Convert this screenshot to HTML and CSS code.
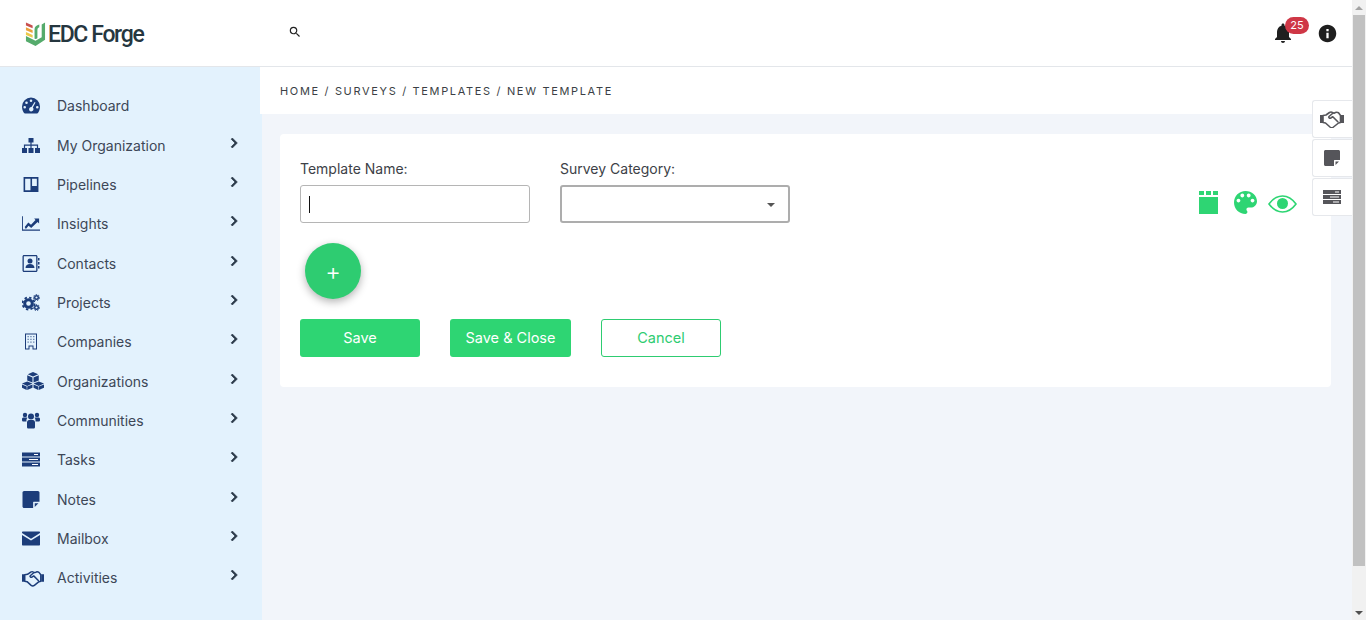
FILE: index.html
```html
<!DOCTYPE html>
<html lang="en">
  <head>
    <meta charset="UTF-8" />
    <meta name="viewport" content="width=device-width, initial-scale=1.0" />
    <title>EDC Forge - New Template</title>
    <link rel="stylesheet" href="styles.css">
  </head>
  <body>
    <svg class="sprites" xmlns="http://www.w3.org/2000/svg">
      <symbol id="i-chevron" viewBox="0 0 24 24">
        <path d="M10 6L8.59 7.41 13.17 12l-4.58 4.59L10 18l6-6z" stroke="currentColor" stroke-width=".8" />
      </symbol>
      <symbol id="i-hands" viewBox="0 0 24 18">
        <path d="M0 5h3v8H0zM21 5h3v8h-3z" />
        <path d="M3 5.500l3-.5 3.500-2.500c1-.6 2-.6 3 0l1.500 .7 1.500-.7c1-.4 2-.3 3 .3l2 2.700v7l-2 .5-5 4c-1 .8-2.500 .8-3.500 0l-4.500-4-2.500-.5z" fill="none" stroke="currentColor" stroke-width="1.600" stroke-linejoin="round" />
        <path d="M12.500 3.500l-3.500 3c-.8 1 .6 2.200 1.800 1.500l2-1.300 5 5" fill="none" stroke="currentColor" stroke-width="1.600" stroke-linecap="round" stroke-linejoin="round" />
      </symbol>
      <symbol id="i-note" viewBox="0 0 16 16">
        <path d="M1.500 0h13c.8 0 1.500 .7 1.500 1.500V10h-5.500c-.3 0-.5 .2-.5 .5V16H1.500C.7 16 0 15.300 0 14.500v-13C0 .7 .7 0 1.500 0z" />
        <path d="M11.500 11.500H15L11.500 15z" />
      </symbol>
      <symbol id="i-tasks" viewBox="0 0 18 14">
        <path d="M0 0h18v4H0zM0 5h18v4H0zM0 10h18v4H0z" fill-rule="evenodd" />
        <path d="M12 1.600h4v.8h-4zM7 6.600h9v.8H7zM10 11.600h6v.8h-6z" fill="#fff" />
      </symbol>
    </svg>

    <div class="window">
      <div class="screen">
        <header class="topbar">
          <a class="logo">
            <svg class="logo-mark" viewBox="0 0 22 26" xmlns="http://www.w3.org/2000/svg">
              <path d="M1 1l7 3v3L1 4z" fill="#c8504f" />
              <path d="M1 6l7 3v3L1 9z" fill="#e9a13b" />
              <path d="M1 11l7 3v3l-7-3z" fill="#ecc94a" />
              <path d="M1 15l10 5 6.500-3.500V3L21 1v18l-10 6.500L1 20.500z" fill="#55ab6c" />
              <path d="M10 18V8c0-3 2-4 5-5v3c-1.500 .5-2 1.500-2 3v8.500l-1.500 .8z" fill="#55ab6c" />
            </svg>
            <span class="logo-text">EDC Forge</span>
          </a>
          <svg class="search-icon" viewBox="0 0 24 24" xmlns="http://www.w3.org/2000/svg">
            <path d="M15.500 14h-.79l-.28-.27A6.471 6.471 0 0 0 16 9.500 6.500 6.500 0 1 0 9.500 16c1.610 0 3.090-.59 4.230-1.570l.27 .28v.79l5 4.990L20.490 19l-4.990-5zm-6 0C7.010 14 5 11.990 5 9.500S7.010 5 9.500 5 14 7.010 14 9.500 11.990 14 9.500 14z" />
          </svg>
          <div class="topbar-right">
            <div class="bell">
              <svg viewBox="0 0 24 24" xmlns="http://www.w3.org/2000/svg">
                <path d="M12 22c1.100 0 2-.9 2-2h-4c0 1.100 .89 2 2 2zm6-6v-5c0-3.070-1.640-5.640-4.500-6.320V4c0-.83-.67-1.500-1.500-1.500s-1.500 .67-1.500 1.500v.68C7.630 5.360 6 7.920 6 11v5l-2 2v1h16v-1l-2-2z" />
              </svg>
              <span class="badge">25</span>
            </div>
            <svg class="info-icon" viewBox="0 0 24 24" xmlns="http://www.w3.org/2000/svg">
              <path d="M12 2C6.480 2 2 6.480 2 12s4.480 10 10 10 10-4.480 10-10S17.520 2 12 2zm1.300 15.500h-2.600v-6.500h2.600zm0-8h-2.600V6.800h2.600z" />
            </svg>
          </div>
        </header>

        <div class="body-row">
          <nav class="sidebar">
            <a class="nav-item">
              <svg class="nav-icon" viewBox="0 0 18 16" xmlns="http://www.w3.org/2000/svg">
                <path fill-rule="evenodd" d="M9 0a9 9 0 0 1 9 9c0 2.500-.7 4.700-2 6.500-.3 .3-.6 .5-1 .5H3c-.4 0-.7-.2-1-.5C.7 13.700 0 11.500 0 9a9 9 0 0 1 9-9zM9 2a1.300 1.300 0 1 0 0 2.600A1.300 1.300 0 0 0 9 2zM4.500 4a1.300 1.300 0 1 0 0 2.600 1.300 1.300 0 0 0 0-2.600zM2.700 8.500a1.300 1.300 0 1 0 0 2.600 1.300 1.300 0 0 0 0-2.600zM15.300 8.500a1.300 1.300 0 1 0 0 2.600 1.300 1.300 0 0 0 0-2.600zM12.600 4.600L9.500 9.500a2.200 2.200 0 1 0 1.300 .6l2.700-5z" />
              </svg>
              <span class="nav-label">Dashboard</span>
            </a>
            <a class="nav-item">
              <svg class="nav-icon" viewBox="0 0 18 15" xmlns="http://www.w3.org/2000/svg">
                <path d="M6.500 0h5v4.500h-5zM0 10h5v5H0zM6.500 10h5v5h-5zM13 10h5v5h-5z" />
                <path d="M8.400 4h1.200v2.500h6.500V11h-1.200V7.700H9.600V11H8.400V7.700H3.100V11H1.900V6.500h6.500z" />
              </svg>
              <span class="nav-label">My Organization</span>
              <svg class="nav-arrow"><use href="#i-chevron" /></svg>
            </a>
            <a class="nav-item">
              <svg class="nav-icon" viewBox="0 0 16 16" xmlns="http://www.w3.org/2000/svg">
                <path fill-rule="evenodd" d="M1 1h14v14H1zM2.500 2.500V13.500H7.500V2.500zM9 2.500V9.500H13.500V2.500z" />
              </svg>
              <span class="nav-label">Pipelines</span>
              <svg class="nav-arrow"><use href="#i-chevron" /></svg>
            </a>
            <a class="nav-item">
              <svg class="nav-icon" viewBox="0 0 20 16" xmlns="http://www.w3.org/2000/svg">
                <path d="M0 0h1v14.800h19V16H0z" />
                <path d="M3 12l4-5 3 2.500L15 4l-1.500-1.500H19V8l-1.700-1.700L10.200 13 7.300 10.400 4.300 14z" />
              </svg>
              <span class="nav-label">Insights</span>
              <svg class="nav-arrow"><use href="#i-chevron" /></svg>
            </a>
            <a class="nav-item">
              <svg class="nav-icon" viewBox="0 0 18 17" xmlns="http://www.w3.org/2000/svg">
                <path fill-rule="evenodd" d="M2 0h12c.8 0 1.500 .7 1.500 1.500v14c0 .8-.7 1.500-1.500 1.500H2c-.8 0-1.500-.7-1.500-1.500v-14C.5 .7 1.200 0 2 0zM2 1.300c-.1 0-.2 .1-.2 .2v14c0 .1 .1 .2 .2 .2h12c.1 0 .2-.1 .2-.2v-14c0-.1-.1-.2-.2-.2z" />
                <circle cx="8" cy="6" r="2.500" />
                <path d="M3.500 13c0-2.500 2-4 4.500-4s4.500 1.500 4.500 4zM16 3h1.500v2.500H16zM16 7h1.500v2.500H16zM16 11h1.500v2.500H16z" />
              </svg>
              <span class="nav-label">Contacts</span>
              <svg class="nav-arrow"><use href="#i-chevron" /></svg>
            </a>
            <a class="nav-item">
              <svg class="nav-icon" viewBox="0 0 18 16" xmlns="http://www.w3.org/2000/svg">
                <circle cx="6.500" cy="9" r="3.800" fill="none" stroke="currentColor" stroke-width="3" />
                <circle cx="6.500" cy="9" r="6" fill="none" stroke="currentColor" stroke-width="1.800" stroke-dasharray="2.400 2.300" />
                <circle cx="14.500" cy="3" r="1.800" fill="none" stroke="currentColor" stroke-width="1.400" />
                <circle cx="14.500" cy="3" r="3" fill="none" stroke="currentColor" stroke-width="1" stroke-dasharray="1.400 1.200" />
                <circle cx="14.500" cy="13" r="1.800" fill="none" stroke="currentColor" stroke-width="1.400" />
                <circle cx="14.500" cy="13" r="3" fill="none" stroke="currentColor" stroke-width="1" stroke-dasharray="1.400 1.200" />
              </svg>
              <span class="nav-label">Projects</span>
              <svg class="nav-arrow"><use href="#i-chevron" /></svg>
            </a>
            <a class="nav-item">
              <svg class="nav-icon" viewBox="0 0 18 16" xmlns="http://www.w3.org/2000/svg">
                <path fill-rule="evenodd" d="M3 0h12v16h-4.500v-3h-3v3H3zM4 1v14h2.500v-3h5v3H14V1z" />
                <path d="M5.500 2.500h1.300v1.300H5.500zM8.300 2.500h1.300v1.300H8.300zM11.100 2.500h1.300v1.300h-1.300zM5.500 5.200h1.300v1.300H5.500zM8.300 5.200h1.300v1.300H8.300zM11.100 5.200h1.300v1.300h-1.300zM5.500 7.900h1.300v1.300H5.500zM8.300 7.900h1.300v1.300H8.300zM11.100 7.900h1.300v1.300h-1.300z" opacity=".65" />
              </svg>
              <span class="nav-label">Companies</span>
              <svg class="nav-arrow"><use href="#i-chevron" /></svg>
            </a>
            <a class="nav-item">
              <svg class="nav-icon wide" viewBox="0 0 21 17" xmlns="http://www.w3.org/2000/svg">
                <path d="M10.500 0l5 2-5 2.200-5-2.200zM5 3l5 2.200v4.800L5 8zM16 3v5l-5 2V5.200zM5 9l5 2-5 2.200-5-2.200zM16 9l5 2-5 2.200-5-2.200z" />
                <path d="M0 11.800l4.500 2V17L0 15zM10 11.800V15l-5 2v-3.200zM11 11.800l4.500 2V17L11 15zM21 11.800V15l-5 2v-3.200z" />
              </svg>
              <span class="nav-label">Organizations</span>
              <svg class="nav-arrow"><use href="#i-chevron" /></svg>
            </a>
            <a class="nav-item">
              <svg class="nav-icon" viewBox="0 0 18 16" xmlns="http://www.w3.org/2000/svg">
                <circle cx="3" cy="2.500" r="2.200" />
                <circle cx="15" cy="2.500" r="2.200" />
                <circle cx="9" cy="4" r="3" />
                <path d="M0 6.500c0-1 .8-1.500 1.500-1.500h3c.4 0 .7 .1 1 .3C4.500 6 4.300 8 4.500 9H1.500C.7 9 0 8.500 0 7.500zM18 6.500c0-1-.8-1.500-1.500-1.500h-3c-.4 0-.7 .1-1 .3 1 .7 1.200 2.700 1 3.700h3c.8 0 1.500-.5 1.500-1.500zM5 10c0-1.500 1-2.500 2-2.500h4c1 0 2 1 2 2.500v4.500c0 1-.7 1.500-1.500 1.500h-5C5.700 16 5 15.500 5 14.500z" />
              </svg>
              <span class="nav-label">Communities</span>
              <svg class="nav-arrow"><use href="#i-chevron" /></svg>
            </a>
            <a class="nav-item">
              <svg class="nav-icon"><use href="#i-tasks" /></svg>
              <span class="nav-label">Tasks</span>
              <svg class="nav-arrow"><use href="#i-chevron" /></svg>
            </a>
            <a class="nav-item">
              <svg class="nav-icon"><use href="#i-note" /></svg>
              <span class="nav-label">Notes</span>
              <svg class="nav-arrow"><use href="#i-chevron" /></svg>
            </a>
            <a class="nav-item">
              <svg class="nav-icon" viewBox="0 0 18 14" xmlns="http://www.w3.org/2000/svg">
                <path d="M1 0h16c.6 0 1 .4 1 1v.6L9 7.200 0 1.600V1c0-.6 .4-1 1-1zM0 3.400l9 5.600 9-5.600V13c0 .6-.4 1-1 1H1c-.6 0-1-.4-1-1z" />
              </svg>
              <span class="nav-label">Mailbox</span>
              <svg class="nav-arrow"><use href="#i-chevron" /></svg>
            </a>
            <a class="nav-item">
              <svg class="nav-icon wide"><use href="#i-hands" /></svg>
              <span class="nav-label">Activities</span>
              <svg class="nav-arrow"><use href="#i-chevron" /></svg>
            </a>
          </nav>

          <main class="main">
            <div class="breadcrumb">HOME / SURVEYS / TEMPLATES / NEW TEMPLATE</div>
            <div class="content">
              <section class="card">
                <div class="form-head">
                  <div class="field">
                    <label class="field-label">Template Name:</label>
                    <div class="input"><span class="caret"></span></div>
                  </div>
                  <div class="field">
                    <label class="field-label">Survey Category:</label>
                    <div class="input select"><span class="select-arrow"></span></div>
                  </div>
                  <div class="tools">
                    <svg class="tool-block" viewBox="0 0 19 23" xmlns="http://www.w3.org/2000/svg">
                      <path d="M0 0h5v4H0zM7 0h5v4H7zM14 0h5v4h-5zM0 6h19v17H0z" />
                    </svg>
                    <svg class="tool-palette" viewBox="3 3 18 18" xmlns="http://www.w3.org/2000/svg">
                      <path d="M12 3c-4.970 0-9 4.030-9 9s4.030 9 9 9c.83 0 1.500-.67 1.500-1.500 0-.39-.15-.74-.39-1.010-.23-.26-.38-.61-.38-.99 0-.83 .67-1.500 1.500-1.500H16c2.760 0 5-2.240 5-5 0-4.420-4.030-8-9-8zm-5.500 9c-.83 0-1.500-.67-1.500-1.500S5.670 9 6.500 9 8 9.670 8 10.500 7.330 12 6.500 12zm3-4C8.670 8 8 7.330 8 6.500S8.670 5 9.500 5s1.500 .67 1.500 1.500S10.330 8 9.500 8zm5 0c-.83 0-1.500-.67-1.500-1.500S13.670 5 14.500 5s1.500 .67 1.500 1.500S15.330 8 14.500 8zm3 4c-.83 0-1.500-.67-1.500-1.500S16.670 9 17.500 9s1.500 .67 1.500 1.500-.67 1.500-1.500 1.500z" />
                    </svg>
                    <svg class="tool-eye" viewBox="0 0 29 18" xmlns="http://www.w3.org/2000/svg">
                      <path d="M1 9C5 3.500 9.500 1 14.500 1S24 3.500 28 9C24 14.500 19.500 17 14.500 17S5 14.500 1 9z" fill="none" stroke="currentColor" stroke-width="1.600" />
                      <circle cx="14.500" cy="8.500" r="5.500" />
                    </svg>
                  </div>
                </div>
                <button class="fab">+</button>
                <div class="actions">
                  <button class="btn btn-solid">Save</button>
                  <button class="btn btn-solid btn-wide">Save &amp; Close</button>
                  <button class="btn btn-outline">Cancel</button>
                </div>
              </section>
            </div>
          </main>
        </div>

        <div class="side-tabs">
          <div class="side-tab"><svg class="tab-hands"><use href="#i-hands" /></svg></div>
          <div class="side-tab"><svg class="tab-note"><use href="#i-note" /></svg></div>
          <div class="side-tab"><svg class="tab-tasks"><use href="#i-tasks" /></svg></div>
        </div>
      </div>

      <div class="scrollbar">
        <span class="scroll-btn"><span class="arrow-up"></span></span>
        <div class="scroll-track"><div class="scroll-thumb"></div></div>
        <span class="scroll-btn"><span class="arrow-down"></span></span>
      </div>
    </div>
  </body>
</html>
```

FILE: styles.css
```css
* {
  box-sizing: border-box;
}

html,
body {
  margin: 0;
  padding: 0;
  height: 100%;
  overflow: hidden;
}

body {
  font-family: "Inter", "Open Sans", sans-serif;
  font-size: 14px;
  color: #3d4757;
  background: #f2f5fa;
}

.sprites {
  display: none;
}

.window {
  display: flex;
  height: 620px;
}

.screen {
  flex: 1;
  min-width: 0;
  display: flex;
  flex-direction: column;
  position: relative;
}

/* top bar */
.topbar {
  height: 67px;
  flex: none;
  display: flex;
  align-items: center;
  background: #fff;
  border-bottom: 1px solid #e3e6ea;
  padding: 0 14px 0 25px;
}

.logo {
  display: flex;
  align-items: center;
  gap: 2px;
  width: 263px;
}

.logo-mark {
  width: 21px;
  height: 26px;
  margin-top: 1px;
}

.logo-text {
  margin-top: 2px;
  font-family: "Roboto", sans-serif;
  font-size: 23px;
  font-weight: 500;
  letter-spacing: -1.35px;
  color: #25363f;
}

.search-icon {
  width: 14px;
  height: 14px;
  margin-top: -3px;
  fill: #222;
}

.topbar-right {
  margin-left: auto;
  display: flex;
  align-items: center;
  gap: 22px;
}

.bell {
  position: relative;
  width: 24px;
  height: 24px;
  fill: #1f1f1f;
}

.bell svg {
  display: block;
  width: 24px;
  height: 24px;
}

.badge {
  position: absolute;
  left: 14px;
  top: -4px;
  width: 24px;
  height: 17px;
  border-radius: 9px;
  background: #cf3746;
  color: #fff;
  font-size: 11px;
  line-height: 16px;
  text-align: center;
}

.info-icon {
  width: 21px;
  height: 21px;
  fill: #1f1f1f;
}

/* sidebar + main */
.body-row {
  flex: 1;
  min-height: 0;
  display: flex;
}

.sidebar {
  width: 262px;
  flex: none;
  background: #e3f2fd;
  padding-top: 19.2px;
}

.nav-item {
  height: 39.33px;
  display: flex;
  align-items: center;
  padding-left: 22px;
}

.nav-icon {
  width: 18px;
  height: 17px;
  flex: none;
  margin-right: 17px;
  fill: #1c3d7a;
  color: #1c3d7a;
}

.nav-icon.wide {
  width: 22px;
  height: 18px;
  margin-right: 13px;
}

.nav-label {
  flex: 1;
  font-size: 14px;
}

.nav-arrow {
  width: 20px;
  height: 20px;
  margin: -5px 18px 0 0;
  fill: #2b3a4a;
  color: #2b3a4a;
}

.main {
  flex: 1;
  min-width: 0;
  display: flex;
  flex-direction: column;
}

.breadcrumb {
  height: 47px;
  flex: none;
  margin-left: -2px;
  padding: 0 20px;
  display: flex;
  align-items: center;
  background: #fff;
  font-size: 11px;
  letter-spacing: 1.66px;
  color: #3b3f45;
}

.content {
  flex: 1;
  padding: 20px 21px 0 18px;
}

.card {
  background: #fff;
  border-radius: 4px;
  padding: 26px 20px 30px;
  height: 253px;
}

.form-head {
  display: flex;
  gap: 30px;
}

.field {
  width: 230px;
}

.field-label {
  display: block;
  height: 25px;
  line-height: 17px;
  font-size: 14px;
  color: #3d4147;
}

.input {
  height: 38px;
  border: 1px solid #b5b5b5;
  border-radius: 3px;
  background: #fff;
  display: flex;
  align-items: center;
  padding-left: 8px;
}

.caret {
  width: 1px;
  height: 17px;
  background: #111;
}

.select {
  border: 2px solid #adadad;
  justify-content: flex-end;
  padding-right: 13px;
}

.select-arrow {
  border-left: 4px solid transparent;
  border-right: 4px solid transparent;
  border-top: 4px solid #555;
  margin-top: 2px;
}

.tools {
  margin-left: auto;
  margin-right: 14px;
  height: 54px;
  display: flex;
  align-items: flex-end;
  gap: 16px;
  fill: #2ed573;
  color: #2ed573;
}

.tool-block {
  width: 19px;
  height: 23px;
}

.tool-palette {
  width: 23px;
  height: 23px;
}

.tool-eye {
  width: 29px;
  height: 18px;
  margin: 0 0 1px -5px;
}

.fab {
  display: block;
  width: 56px;
  height: 56px;
  margin: 20px 0 20px 5px;
  border: none;
  border-radius: 50%;
  background: #2ecc71;
  color: #fff;
  font-family: inherit;
  font-size: 24px;
  font-weight: 300;
  box-shadow: 0 3px 8px rgba(0, 0, 0, .3);
}

.actions {
  display: flex;
  gap: 30px;
}

.btn {
  width: 120px;
  height: 38px;
  padding-bottom: 2px;
  border-radius: 3px;
  font-family: inherit;
  font-size: 14.5px;
}

.btn-wide {
  width: 121px;
}

.btn-solid {
  border: none;
  background: #2ed573;
  color: #fff;
}

.btn-outline {
  border: 1px solid #2ecc71;
  background: #fff;
  color: #2ecc71;
}

/* floating tabs on the right edge */
.side-tabs {
  position: absolute;
  top: 100px;
  right: 0;
  display: flex;
  flex-direction: column;
  gap: 1px;
}

.side-tab {
  width: 40px;
  height: 38px;
  padding-right: 2px;
  display: flex;
  align-items: center;
  justify-content: center;
  background: #fff;
  border: 1px solid #e6e8ec;
  border-right: none;
  border-radius: 3px 0 0 3px;
  fill: #55555a;
  color: #55555a;
}

.tab-hands {
  width: 24px;
  height: 18px;
}

.tab-note {
  width: 16px;
  height: 16px;
}

.tab-tasks {
  width: 18px;
  height: 14px;
}

/* scrollbar */
.scrollbar {
  width: 14px;
  flex: none;
  display: flex;
  flex-direction: column;
  background: #f1f1f1;
}

.scroll-btn {
  height: 15px;
  flex: none;
  display: flex;
  align-items: center;
  justify-content: center;
}

.arrow-up {
  border-left: 4px solid transparent;
  border-right: 4px solid transparent;
  border-bottom: 4px solid #a3a3a3;
}

.arrow-down {
  border-left: 4px solid transparent;
  border-right: 4px solid transparent;
  border-top: 4px solid #505050;
}

.scroll-track {
  flex: 1;
}

.scroll-thumb {
  height: 551px;
  margin: 0 1px;
  background: #c1c1c1;
}
```
